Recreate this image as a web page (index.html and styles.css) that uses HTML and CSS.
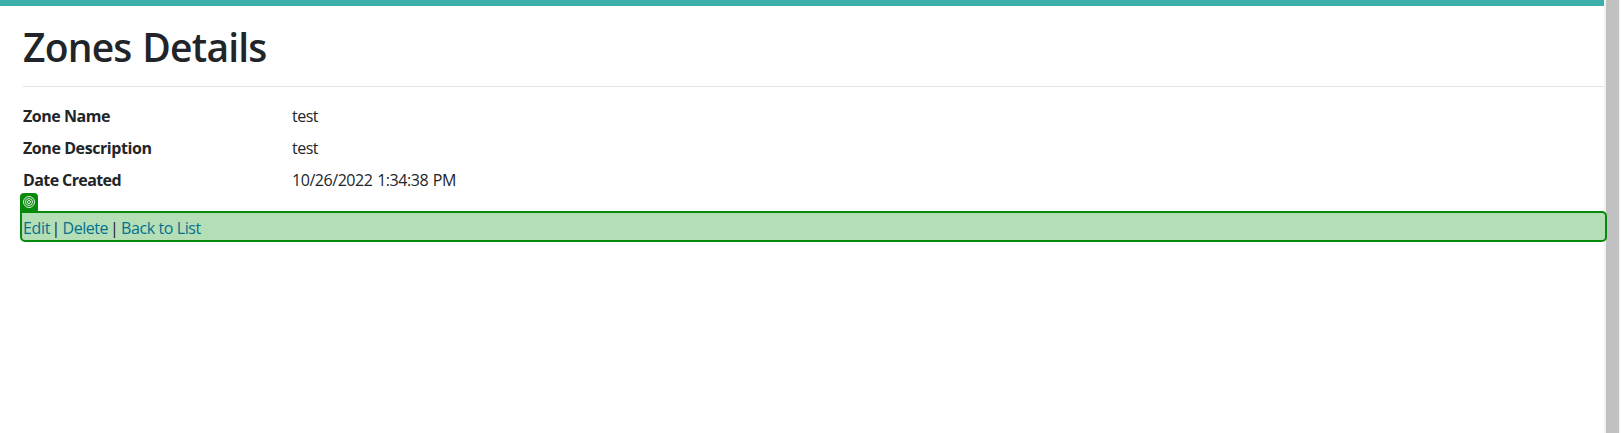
FILE: index.html
```html
<!DOCTYPE html>
<html lang="en">
<head>
<meta charset="utf-8">
<title>Zones Details</title>
<link rel="stylesheet" href="styles.css">
</head>
<body>
<div class="page">
  <main class="content">
    <h1 class="title">Zones Details</h1>
    <dl class="details">
      <dt class="t-name">Zone Name</dt><dd class="t-test">test</dd>
      <dt class="t-desc">Zone Description</dt><dd class="t-test">test</dd>
      <dt class="t-created">Date Created</dt><dd class="t-date">10/26/2022 1:34:38 PM</dd>
    </dl>
    <div class="actions">
      <div class="badge">
        <svg width="12" height="12" viewBox="0 0 12 12" fill="none" stroke="#fff" stroke-width=".85"><circle cx="6" cy="6" r="5.5"/><circle cx="6" cy="6" r="3.5"/><circle cx="6" cy="6" r="1.5"/></svg>
      </div>
      <a class="t-edit">Edit</a><i>|</i><a class="t-delete">Delete</a><i>|</i><a class="t-back">Back to List</a>
    </div>
  </main>
  <div class="scrollbar"><div class="thumb"></div></div>
</div>
</body>
</html>
```
FILE: styles.css
```css
* { box-sizing: border-box; }
body { margin: 0; background: #fff; color: #212529; font: 16px/24px "Open Sans", "Noto Sans", sans-serif; overflow: hidden; }
.page { display: flex; width: 1620px; height: 433px; }
.content { width: 1604px; border-top: 6px solid #3dafaa; }
.title { margin: 0 0 0 23px; height: 81px; padding-top: 17px; border-bottom: 1px solid #e3e4e4; font-size: 39px; line-height: 48px; font-weight: 600; letter-spacing: -.8px; word-spacing: 1.5px; white-space: nowrap; }
.details { display: grid; grid-template-columns: 269px 1fr; grid-auto-rows: 24px; row-gap: 8px; margin: 17px 0 0 23px; height: 88px; white-space: nowrap; }
dt { font-weight: 700; }
dd { margin: 0; }
.t-name { letter-spacing: -.45px; }
.t-desc { letter-spacing: -.42px; }
.t-created { letter-spacing: -.6px; }
.t-test { letter-spacing: -.5px; }
.t-date { letter-spacing: -.45px; word-spacing: 1px; }
.actions { position: relative; display: flex; width: 1587px; height: 31px; margin: 19px 0 0 20px; padding: 3px 1px 0; border: 2px solid #078a0c; border-radius: 0 5px 5px 5px; background: #b4deb5; white-space: nowrap; z-index: 1; }
.actions a { color: #04708f; }
.actions i { font-style: normal; width: 13px; text-align: center; }
.t-edit { width: 26.5px; letter-spacing: -.3px; }
.t-delete { width: 45.5px; letter-spacing: -.45px; }
.t-back { letter-spacing: -.4px; }
.badge { position: absolute; left: -2px; top: -20px; width: 18px; height: 20px; padding: 3px; background: #078a0c; border-radius: 4px 4px 0 0; line-height: 0; }
.scrollbar { width: 16px; padding: 0 1px 0 2px; background: #f1f1f1; }
.thumb { height: 100%; background: #c1c1c1; }
```
